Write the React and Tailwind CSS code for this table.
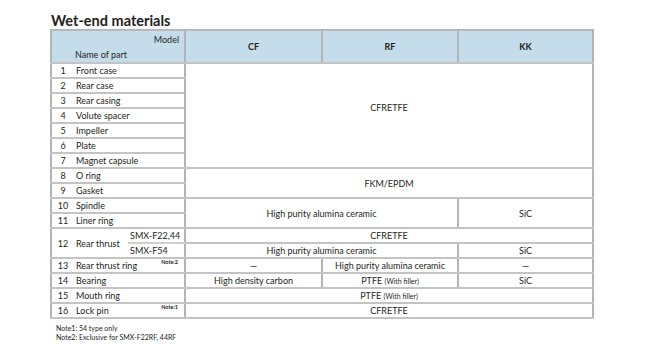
import React from 'react';

const V = 'border-x-2 border-x-[#b4b4b4]';
const H = 'border-y-2 border-y-[#c4c4c4]';
const cell = `${H} ${V} text-center align-middle p-0 leading-none`;

function Name({ n, children, note }) {
  return (
    <>
      <td className={`${H} border-l-2 border-l-[#b4b4b4] text-center p-0 leading-none`}>{n}</td>
      <td colSpan={2} className={`${H} border-r-2 border-r-[#b4b4b4] relative pl-[2px] p-0 leading-none`}>
        {children}
        {note && (
          <span className="absolute right-[6px] top-[1px] text-[5.5px] font-bold leading-none">{note}</span>
        )}
      </td>
    </>
  );
}

function Ptfe() {
  return (
    <>
      PTFE <span className="text-[7px]">(With filler)</span>
    </>
  );
}

export default function App() {
  return (
    <div className="w-[656px] h-[344px] bg-white pl-[50px] pt-[13px] font-['Lato','Liberation_Sans',sans-serif] text-[#231f20]">
      <h2 className="text-[14.5px] font-bold leading-[16px] pl-[1px]">Wet-end materials</h2>
      <table className="table-fixed border-collapse w-[542px] text-[9px]">
        <colgroup>
          <col className="w-[23px]" />
          <col className="w-[54px]" />
          <col className="w-[57px]" />
          <col className="w-[137px]" />
          <col className="w-[136px]" />
          <col className="w-[135px]" />
        </colgroup>
        <tbody>
          <tr className="h-[33px] bg-[#c5dcea]">
            <td colSpan={3} className={`${H} border-t-[#b8b8b8] ${V} p-0 leading-none`}>
              <div className="flex flex-col">
                <span className="self-end pr-[5px]">Model</span>
                <span className="pl-[23px] mt-[6px]">Name of part</span>
              </div>
            </td>
            <td className={`${cell} border-t-[#b8b8b8] font-bold`}>CF</td>
            <td className={`${cell} border-t-[#b8b8b8] font-bold`}>RF</td>
            <td className={`${cell} border-t-[#b8b8b8] font-bold`}>KK</td>
          </tr>
          <tr className="h-[15px]">
            <Name n="1">Front case</Name>
            <td colSpan={3} rowSpan={7} className={`${cell} pb-[16px]`}>CFRETFE</td>
          </tr>
          <tr className="h-[15px]"><Name n="2">Rear case</Name></tr>
          <tr className="h-[15px]"><Name n="3">Rear casing</Name></tr>
          <tr className="h-[15px]"><Name n="4">Volute spacer</Name></tr>
          <tr className="h-[15px]"><Name n="5">Impeller</Name></tr>
          <tr className="h-[15px]"><Name n="6">Plate</Name></tr>
          <tr className="h-[15px]"><Name n="7">Magnet capsule</Name></tr>
          <tr className="h-[15px]">
            <Name n="8">O ring</Name>
            <td colSpan={3} rowSpan={2} className={cell}>FKM/EPDM</td>
          </tr>
          <tr className="h-[15px]"><Name n="9">Gasket</Name></tr>
          <tr className="h-[15px]">
            <Name n="10">Spindle</Name>
            <td colSpan={2} rowSpan={2} className={cell}>High purity alumina ceramic</td>
            <td rowSpan={2} className={cell}>SiC</td>
          </tr>
          <tr className="h-[15px]"><Name n="11">Liner ring</Name></tr>
          <tr className="h-[15px]">
            <td rowSpan={2} className={`${H} border-l-2 border-l-[#b4b4b4] text-center p-0 leading-none`}>12</td>
            <td rowSpan={2} className={`${H} pl-[2px] p-0 leading-none`}>Rear thrust</td>
            <td className={`${H} border-b-[#cfcfcf] border-r-2 border-r-[#b4b4b4] pl-[2px] p-0 leading-none`}>SMX-F22,44</td>
            <td colSpan={3} className={cell}>CFRETFE</td>
          </tr>
          <tr className="h-[15px]">
            <td className={`${H} border-r-2 border-r-[#b4b4b4] pl-[2px] p-0 leading-none`}>SMX-F54</td>
            <td colSpan={2} className={cell}>High purity alumina ceramic</td>
            <td className={cell}>SiC</td>
          </tr>
          <tr className="h-[15px]">
            <Name n="13" note="Note:2">Rear thrust ring</Name>
            <td className={cell}>—</td>
            <td className={cell}>High purity alumina ceramic</td>
            <td className={cell}>—</td>
          </tr>
          <tr className="h-[15px]">
            <Name n="14">Bearing</Name>
            <td className={cell}>High density carbon</td>
            <td className={cell}><Ptfe /></td>
            <td className={cell}>SiC</td>
          </tr>
          <tr className="h-[15px]">
            <Name n="15">Mouth ring</Name>
            <td colSpan={3} className={cell}><Ptfe /></td>
          </tr>
          <tr className="h-[15px]">
            <Name n="16" note="Note:1">Lock pin</Name>
            <td colSpan={3} className={cell}>CFRETFE</td>
          </tr>
        </tbody>
      </table>
      <div className="pl-[6px] pt-[5px] text-[7px] leading-[9px]">
        <p>Note1: 54 type only</p>
        <p>Note2: Exclusive for SMX-F22RF, 44RF</p>
      </div>
    </div>
  );
}
